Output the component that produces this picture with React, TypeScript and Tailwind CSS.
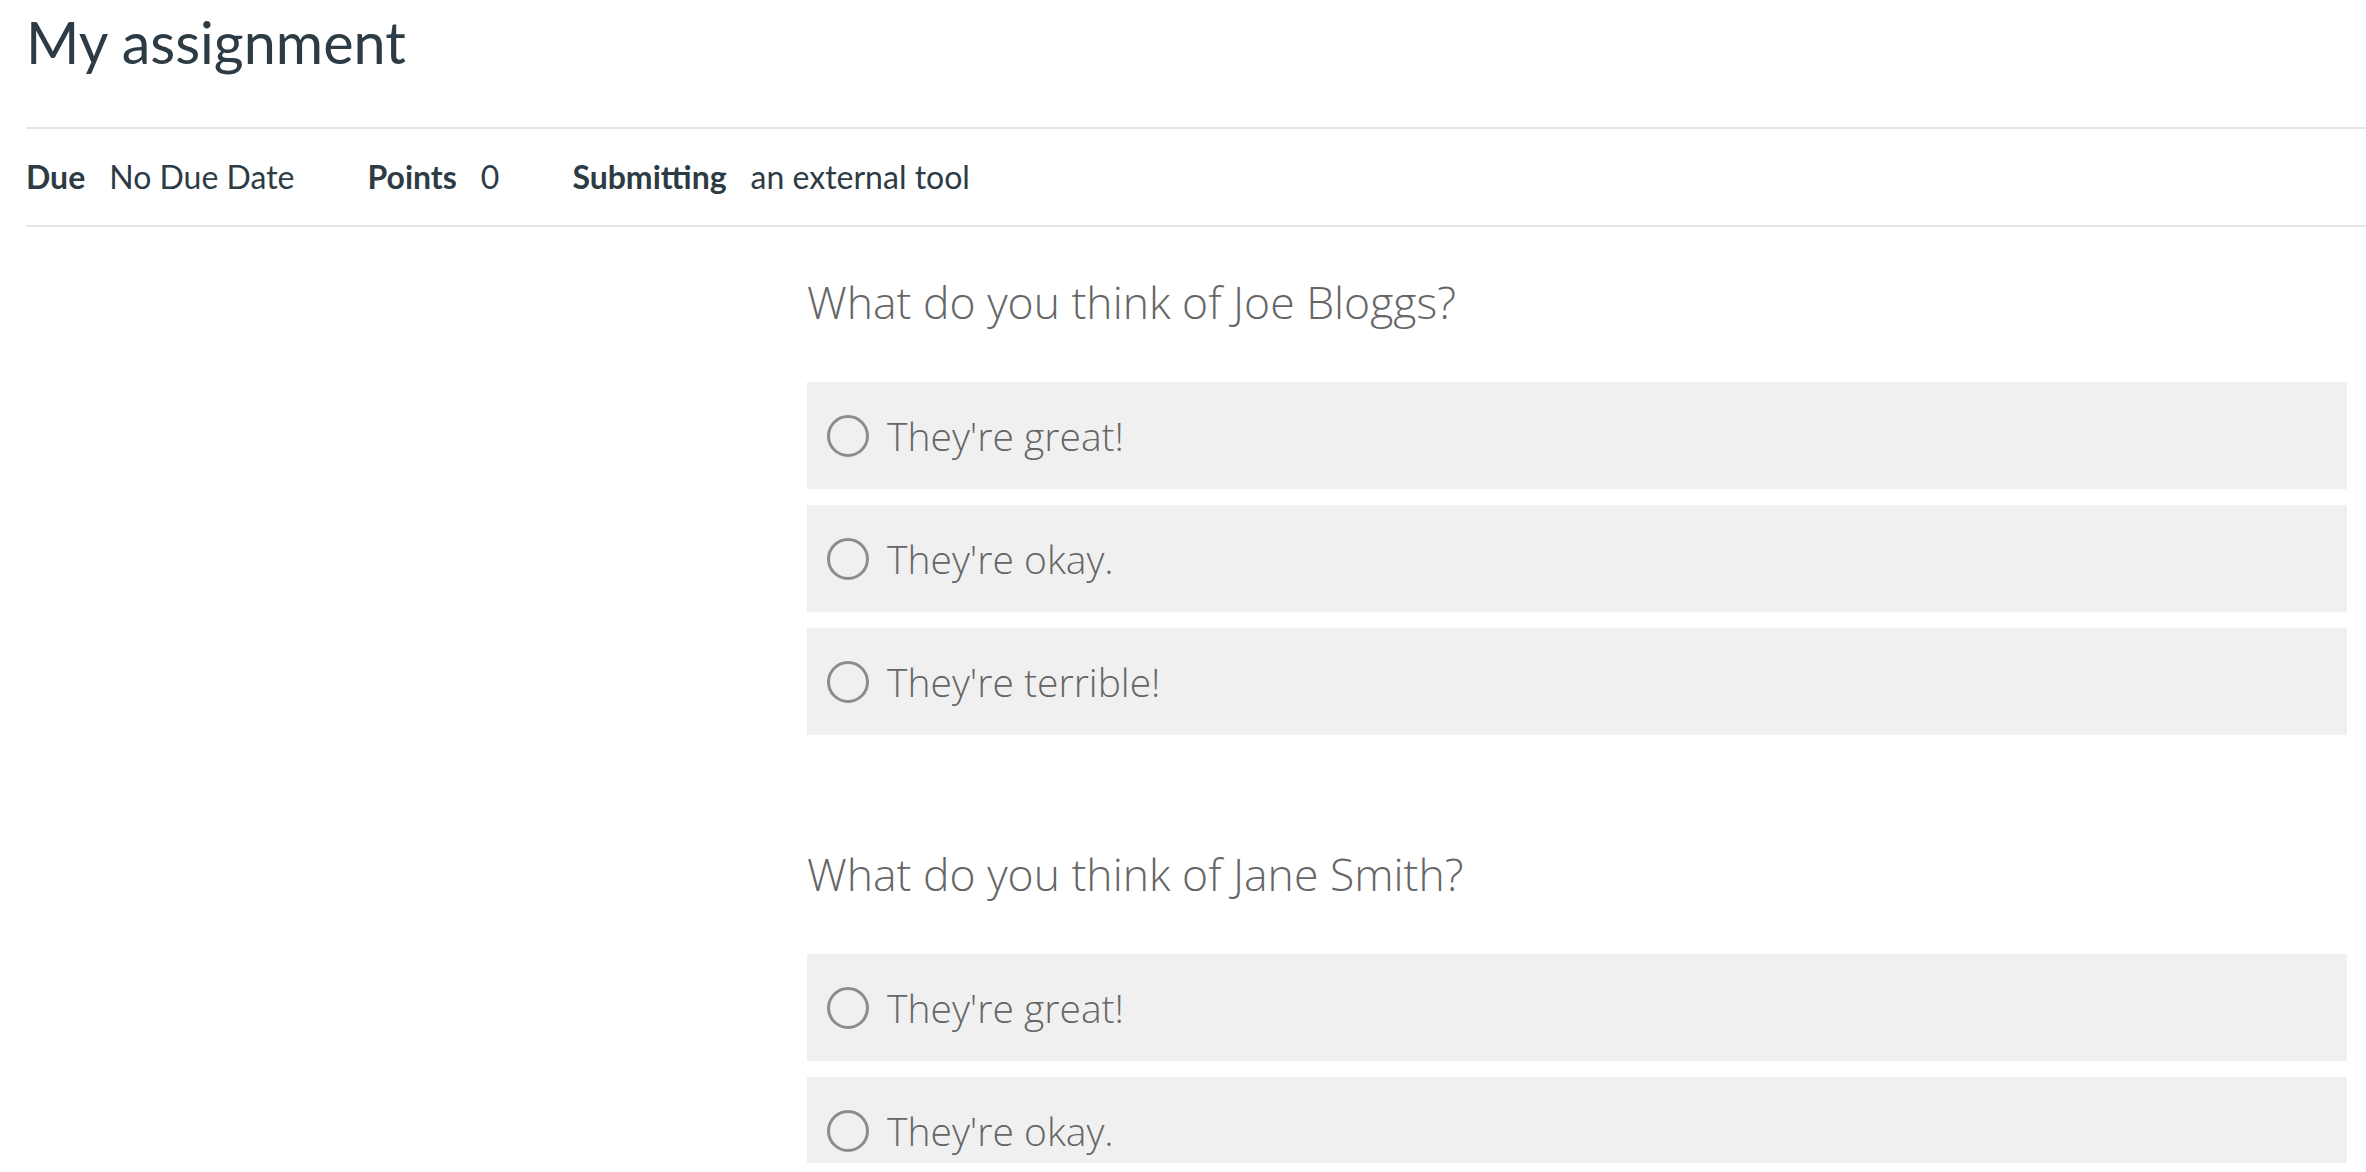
import React from "react";

const QUESTIONS = [
  { id: "q1", text: "What do you think of Joe Bloggs?" },
  { id: "q2", text: "What do you think of Jane Smith?" },
];

const OPTIONS = ["They're great!", "They're okay.", "They're terrible!"];

const DETAILS = [
  { label: "Due", value: "No Due Date" },
  { label: "Points", value: "0" },
  { label: "Submitting", value: "an external tool" },
];

function OptionRow({ label }: { label: string }) {
  return (
    <label className="flex h-[107px] shrink-0 cursor-pointer items-center bg-[#f0f0f0] pl-[20px]">
      <span className="h-[42px] w-[42px] shrink-0 rounded-full border-[3.5px] border-[#8c8c8c]" />
      <span className="ml-[18px] text-[39px] font-light leading-[48px] text-[#666666]">{label}</span>
    </label>
  );
}

function Question({ text }: { text: string }) {
  return (
    <div className="mb-[115px] flex flex-col">
      <h2 className="mb-[56px] text-[44.5px] font-light leading-[48px] text-[#666666]">{text}</h2>
      <div className="flex flex-col gap-4">
        {OPTIONS.map(opt => (
          <OptionRow key={opt} label={opt} />
        ))}
      </div>
    </div>
  );
}

export default function App() {
  return (
    <div className="h-[1172px] overflow-hidden bg-white pl-[26px] font-['Lato',sans-serif] text-[#2d3b45]">
      <h1 className="pt-[9px] text-[57.5px] font-normal leading-[66px]">My assignment</h1>
      <div className="mt-[52px] flex h-[100px] items-center border-y-2 border-[#e6e6e6]">
        {DETAILS.map(d => (
          <div key={d.label} className="mr-[73px] flex items-center text-[32px] leading-[38px]">
            <span className="mr-[24px] font-bold">{d.label}</span>
            <span>{d.value}</span>
          </div>
        ))}
      </div>
      {/* tool iframe area */}
      <div className="flex h-[936px] overflow-hidden pt-[51px] font-['Open_Sans',sans-serif]">
        <div className="w-[781px] shrink-0" />
        <div className="flex-1 pr-[19px]">
          {QUESTIONS.map(q => (
            <Question key={q.id} text={q.text} />
          ))}
        </div>
      </div>
    </div>
  );
}
